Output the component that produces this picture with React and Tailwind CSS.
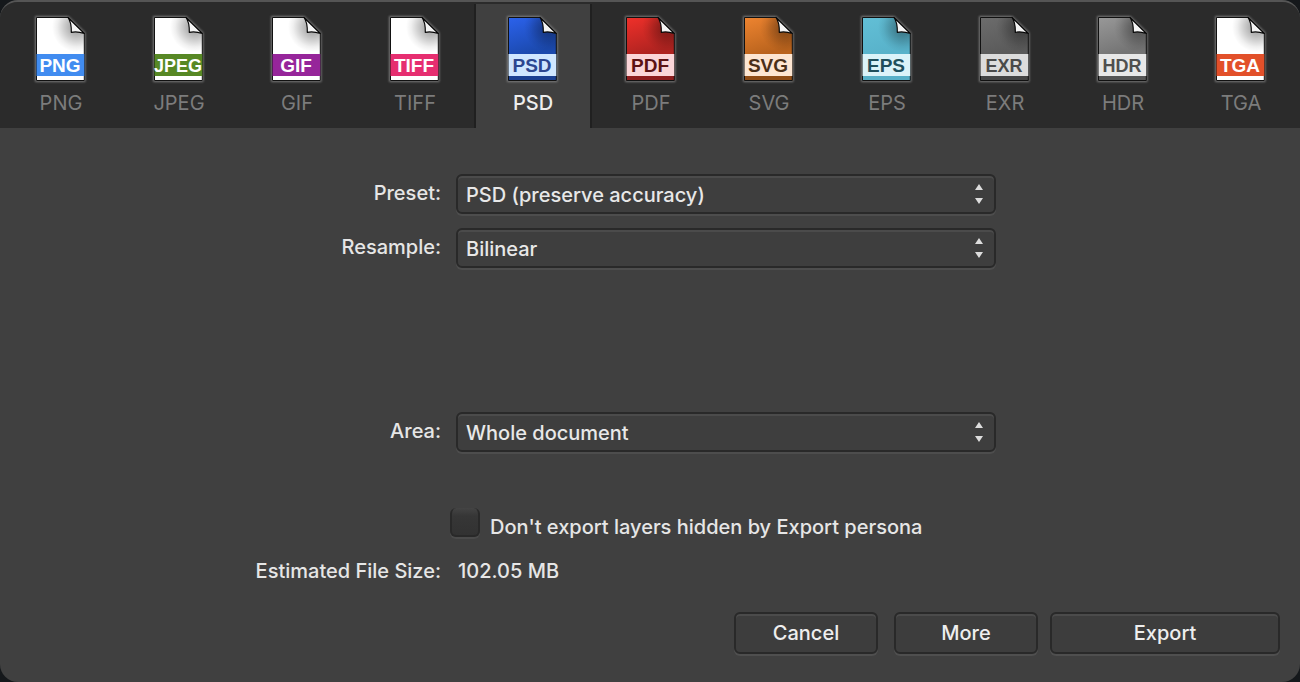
import { useState } from "react";

const formats = [
  { name: "PNG", top: "#ffffff", bottom: "#ffffff", strip: "#ffffff", band: "#418cf0", ink: "#ffffff", size: 19 },
  { name: "JPEG", top: "#ffffff", bottom: "#ffffff", strip: "#ffffff", band: "#578825", ink: "#ffffff", size: 18 },
  { name: "GIF", top: "#ffffff", bottom: "#ffffff", strip: "#ffffff", band: "#96259a", ink: "#ffffff", size: 19 },
  { name: "TIFF", top: "#ffffff", bottom: "#ffffff", strip: "#ffffff", band: "#e62e70", ink: "#ffffff", size: 19 },
  { name: "PSD", top: "#2b62ec", bottom: "#1b49ad", strip: "#1a3f91", band: "#cfe6ff", ink: "#2c4690", size: 19 },
  { name: "PDF", top: "#f0302a", bottom: "#ae2320", strip: "#8e1c1d", band: "#fbd5d8", ink: "#5c1214", size: 19 },
  { name: "SVG", top: "#ee8430", bottom: "#b9631d", strip: "#8f4c15", band: "#fde6d2", ink: "#4a2f18", size: 19 },
  { name: "EPS", top: "#62bfd6", bottom: "#58b2ca", strip: "#58b0c8", band: "#dbf3f9", ink: "#1f4f5c", size: 19 },
  { name: "EXR", top: "#6c6c6c", bottom: "#5a5a5a", strip: "#444444", band: "#dcdcdc", ink: "#4a4a4a", size: 18 },
  { name: "HDR", top: "#989898", bottom: "#747474", strip: "#555555", band: "#e8e8e8", ink: "#4f4f4f", size: 18 },
  { name: "TGA", top: "#ffffff", bottom: "#ffffff", strip: "#ffffff", band: "#e2502a", ink: "#ffffff", size: 19 },
];

function FileIcon({ format }) {
  const id = format.name.toLowerCase();
  return (
    <svg viewBox="1 0 64 74" className="h-[74px] w-16" aria-hidden="true">
      <defs>
        <linearGradient id={`${id}-page`} x1="0" y1="0" x2="0.25" y2="1">
          <stop offset="0" stopColor={format.top} />
          <stop offset="0.65" stopColor={format.bottom} />
        </linearGradient>
        <radialGradient id={`${id}-shade`} gradientUnits="userSpaceOnUse" cx="49" cy="15" r="25">
          <stop offset="0.2" stopColor="#000" stopOpacity="0.34" />
          <stop offset="0.55" stopColor="#000" stopOpacity="0.18" />
          <stop offset="0.8" stopColor="#000" stopOpacity="0.06" />
          <stop offset="1" stopColor="#000" stopOpacity="0" />
        </radialGradient>
        <filter id={`${id}-glow`} x="-20%" y="-20%" width="140%" height="140%">
          <feGaussianBlur stdDeviation="1.3" />
        </filter>
      </defs>
      <path d="M8 5H40L56.500 21V69H8Z" fill="#999" stroke="#999" strokeWidth="2" opacity="0.7" filter={`url(#${id}-glow)`} />
      <path d="M8.500 5.500H40L56.300 21.500V68.500H8.500Z" fill={`url(#${id}-page)`} />
      <path d="M8.500 5.500H40L56.300 21.500V42H8.500Z" fill={`url(#${id}-shade)`} />
      <path d="M8.500 64H56.300V68.500H8.500Z" fill={format.strip} />
      <path d="M8.500 5.500H40L56.300 21.500V68.500H8.500Z" fill="none" stroke="#111" strokeWidth="1" />
      <path d="M8.500 42H56.300V64H8.500Z" fill={format.band} />
      <path d="M40 5.500C42.500 9 43.500 13 43.300 20.300C48 19.500 52 20 56.300 21.500Z" fill="#f4f4f4" stroke="#080808" strokeWidth="1.200" strokeLinejoin="round" />
      <text x="32" y="60" textAnchor="middle" fill={format.ink} fontSize={format.size} fontWeight="700" fontFamily="'Liberation Sans', Arial, sans-serif">
        {format.name}
      </text>
    </svg>
  );
}

function FormatTab({ format, selected, onSelect }) {
  return (
    <button
      type="button"
      role="tab"
      aria-selected={selected}
      aria-label={format.name}
      onClick={onSelect}
      className={
        "flex min-w-0 flex-1 flex-col items-center gap-[3px] border-x-2 pt-2 pb-[11px] text-xl leading-7 " +
        (selected
          ? "border-[#202020] bg-[#404040] font-medium text-[#eeeeee]"
          : "border-transparent font-normal text-[#7c7c7c]")
      }
    >
      <FileIcon format={format} />
      <span>{format.name}</span>
    </button>
  );
}

function Field({ id, label, options }) {
  return (
    <>
      <label htmlFor={id} className="pr-px pb-0.5 text-right">{label}</label>
      <div className="relative">
        <select
          id={id}
          className="block h-10 w-full appearance-none rounded-md border-2 border-[#292929] bg-[#3e3e3e] pt-0.5 pr-10 pl-2 text-[#e8e8e8] shadow-[inset_0_2px_0_#4b4b4b,0_2px_0_#4d4d4d] outline-none"
        >
          {options.map((option) => (
            <option key={option}>{option}</option>
          ))}
        </select>
        <svg viewBox="0 0 8 20" className="pointer-events-none absolute top-2.5 right-[13px] h-5 w-2" fill="#dddddd" aria-hidden="true">
          <path d="M4 0L8 6H0ZM4 20L8 14H0Z" />
        </svg>
      </div>
    </>
  );
}

const buttonStyle =
  "h-[42px] rounded-md border-2 border-[#292929] bg-[#3d3d3d] text-[#eeeeee] shadow-[inset_0_2px_0_#4b4b4b,0_2px_0_#4f4f4f]";

export default function App() {
  const [active, setActive] = useState("PSD");

  return (
    <div className="min-h-screen bg-[#15181b] font-['Inter','Liberation_Sans',sans-serif]">
      <main className="flex min-h-screen flex-col overflow-hidden rounded-[18px] border-t-2 border-t-[#555555] bg-[#404040] text-xl font-medium text-[#e6e6e6]">
        <div role="tablist" aria-label="File format" className="flex bg-[#2b2b2b] pt-0.5 pl-0.5">
          {formats.map((format) => (
            <FormatTab
              key={format.name}
              format={format}
              selected={format.name === active}
              onSelect={() => setActive(format.name)}
            />
          ))}
        </div>

        <form className="flex flex-1 flex-col pt-[46px] pb-7" onSubmit={(event) => event.preventDefault()}>
          <div className="grid grid-cols-[34%_minmax(0,540px)] items-center gap-x-3.5 gap-y-3.5">
            <Field id="preset" label="Preset:" options={["PSD (preserve accuracy)", "PSD (preserve editability)"]} />
            <Field id="resample" label="Resample:" options={["Bilinear", "Nearest Neighbor", "Bicubic"]} />
          </div>
          <div className="mt-36 grid grid-cols-[34%_minmax(0,540px)] items-center gap-x-3.5">
            <Field id="area" label="Area:" options={["Whole document", "Selection only"]} />
          </div>
          <div className="mt-14 grid grid-cols-[34%_minmax(0,1fr)] gap-x-2">
            <div className="col-start-2 flex items-start gap-2.5">
              <input
                id="hidden-layers"
                type="checkbox"
                className="h-[29px] w-[30px] shrink-0 appearance-none rounded-md border-2 border-t-0 border-[#292929] bg-linear-to-b from-[#444444] via-[#363636] via-30% to-[#323232] shadow-[0_2px_0_#4b4b4b] checked:from-[#3b82f6] checked:to-[#2563eb]"
              />
              <label htmlFor="hidden-layers" className="pt-[5px]">Don't export layers hidden by Export persona</label>
            </div>
          </div>
          <div className="mt-4 grid grid-cols-[34%_minmax(0,1fr)] gap-x-4">
            <span className="pr-px text-right">Estimated File Size:</span>
            <output>102.05 MB</output>
          </div>
          <div className="mt-auto flex justify-end pr-5">
            <button type="button" className={buttonStyle + " mr-4 w-36"}>Cancel</button>
            <button type="button" className={buttonStyle + " mr-3 w-36"}>More</button>
            <button type="submit" className={buttonStyle + " w-[230px]"}>Export</button>
          </div>
        </form>
      </main>
    </div>
  );
}
